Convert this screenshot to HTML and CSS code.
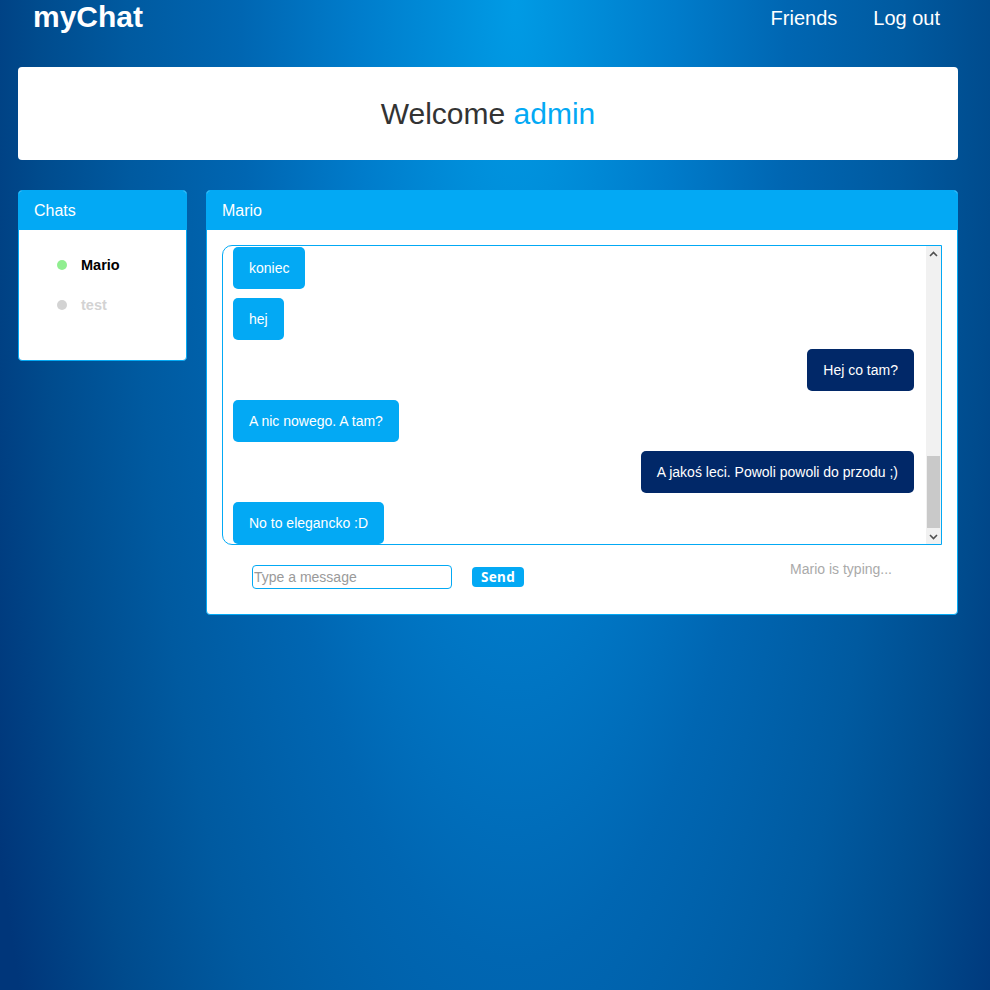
FILE: index.html
```html
<!DOCTYPE html>
<html lang="pl">
<head>
<meta charset="utf-8">
<title>myChat</title>
<link rel="stylesheet" href="styles.css">
</head>
<body>
<div class="page">
  <header class="topbar">
    <h1 class="logo">myChat</h1>
    <nav class="nav">
      <a class="nav-link" href="#">Friends</a>
      <a class="nav-link" href="#">Log out</a>
    </nav>
  </header>

  <section class="welcome">
    <p class="welcome-text">Welcome <span class="user">admin</span></p>
  </section>

  <main class="columns">
    <aside class="panel chats">
      <div class="panel-head">Chats</div>
      <ul class="chat-list">
        <li class="chat-item online"><span class="dot"></span><span class="name">Mario</span></li>
        <li class="chat-item offline"><span class="dot"></span><span class="name">test</span></li>
      </ul>
    </aside>

    <section class="panel conversation">
      <div class="panel-head">Mario</div>
      <div class="conv-body">
        <div class="messages">
          <div class="thread">
            <div class="msg in">koniec</div>
            <div class="msg in">hej</div>
            <div class="msg out">Hej co tam?</div>
            <div class="msg in">A nic nowego. A tam?</div>
            <div class="msg out">A jakoś leci. Powoli powoli do przodu ;)</div>
            <div class="msg in">No to elegancko :D</div>
          </div>
          <div class="scrollbar" aria-hidden="true">
            <div class="sb-btn">
              <svg width="9" height="6" viewBox="0 0 9 6"><path d="M1 5 L4.5 1.5 L8 5" fill="none" stroke="#505050" stroke-width="1.6"/></svg>
            </div>
            <div class="sb-track"><div class="sb-thumb"></div></div>
            <div class="sb-btn">
              <svg width="9" height="6" viewBox="0 0 9 6"><path d="M1 1 L4.5 4.5 L8 1" fill="none" stroke="#505050" stroke-width="1.6"/></svg>
            </div>
          </div>
        </div>
        <form class="composer" onsubmit="return false">
          <input class="msg-input" type="text" placeholder="Type a message">
          <button class="send" type="submit">Send</button>
          <span class="typing">Mario is typing...</span>
        </form>
      </div>
    </section>
  </main>
</div>
</body>
</html>
```

FILE: styles.css
```css
html {
  height: 100%;
}

body {
  margin: 0;
  min-height: 100%;
  font-family: "Liberation Sans", Arial, sans-serif;
  background: radial-gradient(ellipse 570px 2000px at 52% 0,
      #009be5 0%,
      #007ccb 28%,
      #0066b2 48%,
      #005aa0 68%,
      #004b8d 84%,
      #00367a 100%) no-repeat;
  background-color: #00367a;
}

.page {
  padding: 0 32px 0 18px;
}

.topbar {
  display: flex;
  align-items: flex-start;
  justify-content: space-between;
  padding: 0 18px 0 15px;
  height: 34px;
}

.logo {
  margin: 0;
  font-size: 30px;
  line-height: 34px;
  font-weight: bold;
  color: #fff;
}

.nav {
  display: flex;
  gap: 36px;
  padding-top: 6px;
}

.nav-link {
  font-size: 20px;
  line-height: 24px;
  color: #fff;
  text-decoration: none;
}

.welcome {
  margin-top: 33px;
  height: 93px;
  background: #fff;
  border-radius: 4px;
  display: flex;
  align-items: center;
  justify-content: center;
}

.welcome-text {
  margin: 0;
  font-size: 30px;
  color: #333;
}

.user {
  color: #03a9f4;
}

.columns {
  margin-top: 30px;
  display: flex;
  align-items: flex-start;
  gap: 19px;
}

.panel {
  background: #fff;
  border: 1px solid #03a9f4;
  border-radius: 4px;
  overflow: hidden;
}

.panel-head {
  height: 39px;
  padding: 0 15px;
  display: flex;
  align-items: center;
  background: #03a9f4;
  color: #fff;
  font-size: 16px;
}

.chats {
  width: 167px;
  flex-shrink: 0;
}

.chat-list {
  list-style: none;
  margin: 0;
  padding: 15px 0 35px 38px;
}

.chat-item {
  height: 40px;
  display: flex;
  align-items: center;
  font-size: 14.5px;
  font-weight: bold;
}

.dot {
  width: 10px;
  height: 10px;
  border-radius: 50%;
  margin-right: 14px;
}

.online .dot {
  background: #90ee90;
}

.online .name {
  color: #000;
}

.offline .dot {
  background: #d3d3d3;
}

.offline .name {
  color: #d3d3d3;
}

.conversation {
  flex: 1;
}

.conv-body {
  padding: 15px 15px 25px;
}

.messages {
  height: 298px;
  border: 1px solid #03a9f4;
  border-radius: 10px 0 0 10px;
  overflow: hidden;
  display: flex;
}

.thread {
  flex: 1;
  display: flex;
  flex-direction: column;
  justify-content: flex-end;
  align-items: flex-start;
  gap: 9px;
  padding: 0 12px 0 10px;
}

.msg {
  padding: 12px 16px;
  font-size: 14px;
  line-height: 18px;
  color: #fff;
  border-radius: 5px;
  white-space: nowrap;
}

.msg.in {
  background: #03a9f4;
}

.msg.out {
  background: #012868;
  align-self: flex-end;
}

.scrollbar {
  width: 15px;
  flex-shrink: 0;
  display: flex;
  flex-direction: column;
  background: #f1f1f1;
}

.sb-btn {
  height: 15px;
  display: flex;
  align-items: center;
  justify-content: center;
}

.sb-track {
  flex: 1;
  display: flex;
  flex-direction: column;
  justify-content: flex-end;
  padding-bottom: 1px;
}

.sb-thumb {
  height: 72px;
  margin: 0 1px;
  background: #c9c9c9;
}

.composer {
  margin: 20px 0 0;
  padding: 0 50px 0 30px;
  display: flex;
  align-items: center;
  height: 24px;
}

.msg-input {
  box-sizing: border-box;
  width: 200px;
  height: 24px;
  margin: 0;
  padding: 1px;
  border: 1px solid #03a9f4;
  border-radius: 4px;
  font-family: "Liberation Sans", Arial, sans-serif;
  font-size: 14px;
  color: #333;
  outline: none;
}

.msg-input::placeholder {
  color: #9a9a9a;
}

.send {
  margin-left: 20px;
  width: 52px;
  height: 20px;
  padding: 0;
  border: none;
  border-radius: 4px;
  background: #03a9f4;
  color: #fff;
  font-family: "Noto Sans", "Open Sans", sans-serif;
  font-size: 13.5px;
  font-weight: bold;
  letter-spacing: 0.3px;
  line-height: 20px;
}

.typing {
  margin-left: auto;
  align-self: flex-start;
  margin-top: -4px;
  font-size: 14px;
  line-height: 16px;
  color: #aaa;
}
```
